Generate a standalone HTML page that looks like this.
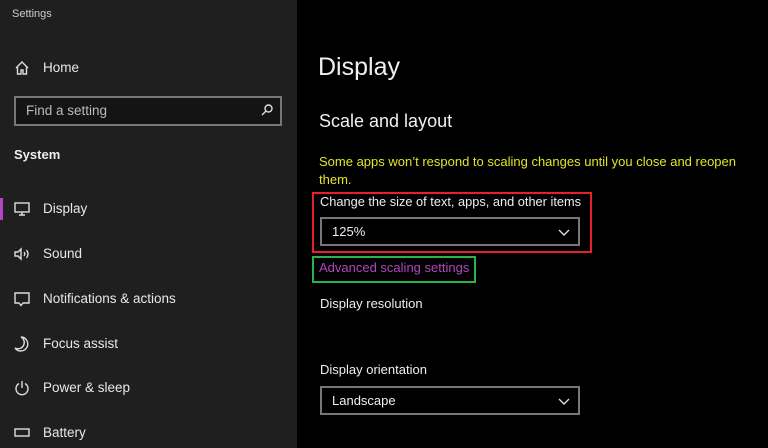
<!DOCTYPE html>
<html><head><meta charset="utf-8"><style>
*{margin:0;padding:0;box-sizing:border-box}
body{width:768px;height:448px;overflow:hidden;background:#000;font-family:"Liberation Sans",sans-serif;color:#fff;position:relative}
.side{position:absolute;left:0;top:0;width:297px;height:448px;background:#1f1f1f}
.a{position:absolute;white-space:nowrap}
.nav{font-size:13.5px;color:#e8e8e8;left:43px}
.ic{position:absolute;left:13px;width:18px;height:18px}
svg{stroke:#ddd;fill:none;stroke-width:1.4}
.dd{position:absolute;border:2px solid #777;background:#000}
.dd span{position:absolute;left:10px;top:5px;font-size:13px;color:#eee}
.dd svg{position:absolute;right:8px;top:8px}
</style></head><body>
<div class="side">
<div class="a" style="left:12px;top:8px;font-size:11px;color:#ccc">Settings</div>
<svg class="ic" style="top:59px" viewBox="0 0 18 18"><path d="M3 9 L9 3 L15 9 M4.5 8 V15 H8 V11 H10 V15 H13.5 V8"/></svg>
<div class="a nav" style="top:60px">Home</div>
<div class="a" style="left:14px;top:96px;width:268px;height:30px;border:2px solid #777;background:#141414"></div>
<div class="a" style="left:26px;top:103px;font-size:13.5px;color:#bbb">Find a setting</div>
<svg class="a" style="left:260px;top:103px;width:14px;height:14px" viewBox="0 0 14 14"><circle cx="8.5" cy="5.5" r="3.5"/><path d="M6 8 L2 12"/></svg>
<div class="a" style="left:14px;top:147px;font-size:13px;font-weight:bold;color:#eee">System</div>
<div class="a" style="left:0;top:198px;width:3px;height:22px;background:#b146c2"></div>
<svg class="ic" style="top:200px" viewBox="0 0 18 18"><rect x="2" y="3" width="14" height="9"/><path d="M9 12 V15 M6 15 H12"/></svg>
<div class="a nav" style="top:201px">Display</div>
<svg class="ic" style="top:245px" viewBox="0 0 18 18"><path d="M2 7 H5 L8 4 V14 L5 11 H2 Z M11 7 Q12.5 9 11 11 M13.5 5 Q16.5 9 13.5 13"/></svg>
<div class="a nav" style="top:246px">Sound</div>
<svg class="ic" style="top:290px" viewBox="0 0 18 18"><path d="M2 3 H16 V13 H10 L8 15.5 L6 13 H2 Z"/></svg>
<div class="a nav" style="top:291px">Notifications &amp; actions</div>
<svg class="ic" style="top:335px" viewBox="0 0 18 18"><path d="M8 2 A7 7 0 1 1 2 13 A6 6 0 0 0 8 2 Z"/></svg>
<div class="a nav" style="top:336px">Focus assist</div>
<svg class="ic" style="top:379px" viewBox="0 0 18 18"><path d="M6 4.5 A6 6 0 1 0 12 4.5 M9 2 V9"/></svg>
<div class="a nav" style="top:380px">Power &amp; sleep</div>
<svg class="ic" style="top:424px" viewBox="0 0 18 18"><rect x="2" y="5" width="14" height="7"/></svg>
<div class="a nav" style="top:425px">Battery</div>
</div>
<div class="a" style="left:318px;top:53px;font-size:25px;color:#f0f0f0">Display</div>
<div class="a" style="left:319px;top:111px;font-size:18px;color:#f0f0f0">Scale and layout</div>
<div class="a" style="left:319px;top:153px;font-size:13px;line-height:18px;color:#e3e32a;white-space:normal;width:440px">Some apps won’t respond to scaling changes until you close and reopen them.</div>
<div class="a" style="left:312px;top:192px;width:280px;height:61px;border:2px solid #e8202a"></div>
<div class="a" style="left:320px;top:194px;font-size:12.8px;color:#eee">Change the size of text, apps, and other items</div>
<div class="dd" style="left:320px;top:217px;width:260px;height:29px"><span>125%</span><svg width="12" height="10" viewBox="0 0 12 10"><path d="M1 3 L6 8 L11 3"/></svg></div>
<div class="a" style="left:312px;top:256px;width:164px;height:27px;border:2px solid #2ab34a"></div>
<div class="a" style="left:319px;top:260px;font-size:13px;color:#b146c2">Advanced scaling settings</div>
<div class="a" style="left:320px;top:296px;font-size:13px;color:#eee">Display resolution</div>
<div class="a" style="left:320px;top:362px;font-size:13px;color:#eee">Display orientation</div>
<div class="dd" style="left:320px;top:386px;width:260px;height:29px"><span>Landscape</span><svg width="12" height="10" viewBox="0 0 12 10"><path d="M1 3 L6 8 L11 3"/></svg></div>
</body></html>
